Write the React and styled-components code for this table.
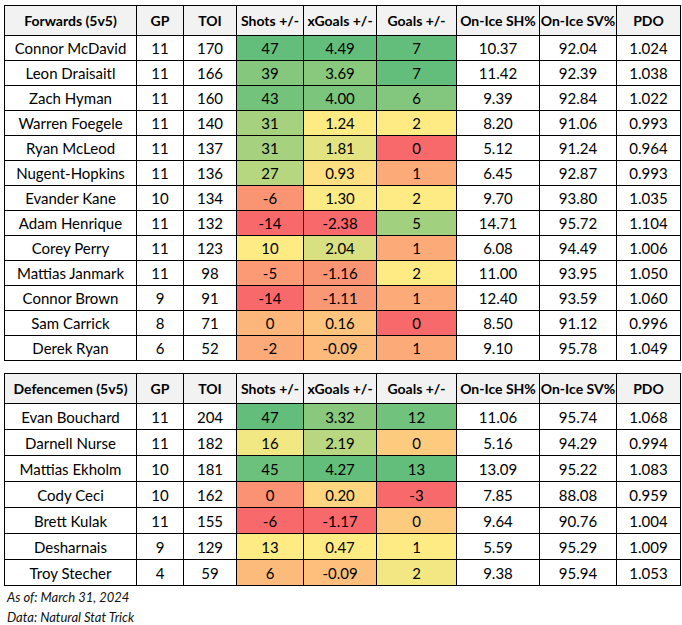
import React from "react";
import styled, { createGlobalStyle } from "styled-components";

const Global = createGlobalStyle`
  html, body { margin: 0; padding: 0; background: #ffffff; }
  body { font-family: Lato, "Open Sans", "Liberation Sans", sans-serif; color: #000; }
`;

const Page = styled.div`
  width: 682px;
  height: 625px;
  padding: 5px 0 0 4px;
  box-sizing: border-box;
  display: flex;
  flex-direction: column;
  gap: 12px;
`;

const Table = styled.table`
  border-collapse: collapse;
  table-layout: fixed;
  width: 676px;
  font-size: 15px;
  border: 1px solid #000;
`;

const HeadCell = styled.th`
  background: #f2f2f2;
  border: 1px solid #000;
  height: 29px;
  padding: 0;
  font-weight: 700;
  text-align: center;
  white-space: nowrap;
  font-size: 14px;
`;

const Cell = styled.td`
  border: 1px solid #000;
  height: ${(p) => p.$h}px;
  padding: 0;
  text-align: center;
  background: ${(p) => p.$bg || "#ffffff"};
  white-space: nowrap;
`;

const Notes = styled.div`
  display: flex;
  flex-direction: column;
  gap: 4px;
  margin-top: -9px;
  padding-left: 3px;
  font-style: italic;
  font-size: 13px;
  line-height: 16px;
  color: #111;
`;

const widths = [132, 47, 53, 67, 73, 80, 83, 77, 64];

const forwards = [
  ["Connor McDavid", 11, 170, 47, "4.49", 7, "10.37", "92.04", "1.024"],
  ["Leon Draisaitl", 11, 166, 39, "3.69", 7, "11.42", "92.39", "1.038"],
  ["Zach Hyman", 11, 160, 43, "4.00", 6, "9.39", "92.84", "1.022"],
  ["Warren Foegele", 11, 140, 31, "1.24", 2, "8.20", "91.06", "0.993"],
  ["Ryan McLeod", 11, 137, 31, "1.81", 0, "5.12", "91.24", "0.964"],
  ["Nugent-Hopkins", 11, 136, 27, "0.93", 1, "6.45", "92.87", "0.993"],
  ["Evander Kane", 10, 134, -6, "1.30", 2, "9.70", "93.80", "1.035"],
  ["Adam Henrique", 11, 132, -14, "-2.38", 5, "14.71", "95.72", "1.104"],
  ["Corey Perry", 11, 123, 10, "2.04", 1, "6.08", "94.49", "1.006"],
  ["Mattias Janmark", 11, 98, -5, "-1.16", 2, "11.00", "93.95", "1.050"],
  ["Connor Brown", 9, 91, -14, "-1.11", 1, "12.40", "93.59", "1.060"],
  ["Sam Carrick", 8, 71, 0, "0.16", 0, "8.50", "91.12", "0.996"],
  ["Derek Ryan", 6, 52, -2, "-0.09", 1, "9.10", "95.78", "1.049"],
];

const defence = [
  ["Evan Bouchard", 11, 204, 47, "3.32", 12, "11.06", "95.74", "1.068"],
  ["Darnell Nurse", 11, 182, 16, "2.19", 0, "5.16", "94.29", "0.994"],
  ["Mattias Ekholm", 10, 181, 45, "4.27", 13, "13.09", "95.22", "1.083"],
  ["Cody Ceci", 10, 162, 0, "0.20", -3, "7.85", "88.08", "0.959"],
  ["Brett Kulak", 11, 155, -6, "-1.17", 0, "9.64", "90.76", "1.004"],
  ["Desharnais", 9, 129, 13, "0.47", 1, "5.59", "95.29", "1.009"],
  ["Troy Stecher", 4, 59, 6, "-0.09", 2, "9.38", "95.94", "1.053"],
];

const RED = [248, 105, 107];
const YEL = [255, 235, 132];
const GRN = [99, 190, 123];

const mix = (a, b, t) => a.map((v, i) => Math.round(v + (b[i] - v) * t));

function median(arr) {
  const s = [...arr].sort((a, b) => a - b);
  const n = s.length;
  return n % 2 ? s[(n - 1) / 2] : (s[n / 2 - 1] + s[n / 2]) / 2;
}

function scale(values) {
  const min = Math.min(...values);
  const max = Math.max(...values);
  const mid = median(values);
  return (v) => {
    let c;
    if (v <= mid) c = mix(RED, YEL, mid === min ? 1 : (v - min) / (mid - min));
    else c = mix(YEL, GRN, max === mid ? 1 : (v - mid) / (max - mid));
    return `rgb(${c[0]},${c[1]},${c[2]})`;
  };
}

const headers = ["GP", "TOI", "Shots +/-", "xGoals +/-", "Goals +/-", "On-Ice SH%", "On-Ice SV%", "PDO"];

function StatTable({ title, rows, rowH }) {
  const scales = [3, 4, 5].map((ci) => scale(rows.map((r) => Number(r[ci]))));
  return (
    <Table>
      <colgroup>
        {widths.map((w, i) => (
          <col key={i} style={{ width: w }} />
        ))}
      </colgroup>
      <thead>
        <tr>
          <HeadCell>{title}</HeadCell>
          {headers.map((h) => (
            <HeadCell key={h}>{h}</HeadCell>
          ))}
        </tr>
      </thead>
      <tbody>
        {rows.map((r) => (
          <tr key={r[0]}>
            {r.map((v, ci) => (
              <Cell
                key={ci}
                $h={rowH}
                $bg={ci >= 3 && ci <= 5 ? scales[ci - 3](Number(v)) : undefined}
              >
                {v}
              </Cell>
            ))}
          </tr>
        ))}
      </tbody>
    </Table>
  );
}

export default function App() {
  return (
    <>
      <Global />
      <Page>
        <StatTable title="Forwards (5v5)" rows={forwards} rowH={24} />
        <StatTable title="Defencemen (5v5)" rows={defence} rowH={25} />
        <Notes>
          <span>As of: March 31, 2024</span>
          <span>Data: Natural Stat Trick</span>
        </Notes>
      </Page>
    </>
  );
}
